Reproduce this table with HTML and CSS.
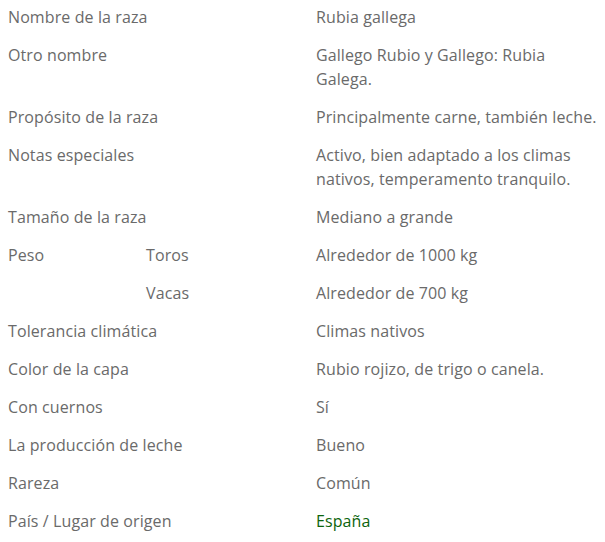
FILE: index.html
```html
<!DOCTYPE html>
<html lang="es">
<head>
<meta charset="utf-8">
<link rel="stylesheet" href="styles.css">
</head>
<body>
<div class="specs">
  <div class="label wide">Nombre de la raza</div><div class="value">Rubia gallega</div>
  <div class="label wide">Otro nombre</div><div class="value">Gallego Rubio y Gallego: Rubia Galega.</div>
  <div class="label wide">Propósito de la raza</div><div class="value">Principalmente carne, también leche.</div>
  <div class="label wide">Notas especiales</div><div class="value">Activo, bien adaptado a los climas nativos, temperamento tranquilo.</div>
  <div class="label wide">Tamaño de la raza</div><div class="value">Mediano a grande</div>
  <div class="label">Peso</div><div class="label">Toros</div><div class="value">Alrededor de 1000 kg</div>
  <div class="label"></div><div class="label">Vacas</div><div class="value">Alrededor de 700 kg</div>
  <div class="label wide">Tolerancia climática</div><div class="value">Climas nativos</div>
  <div class="label wide">Color de la capa</div><div class="value">Rubio rojizo, de trigo o canela.</div>
  <div class="label wide">Con cuernos</div><div class="value">Sí</div>
  <div class="label wide">La producción de leche</div><div class="value">Bueno</div>
  <div class="label wide">Rareza</div><div class="value">Común</div>
  <div class="label wide">País / Lugar de origen</div><div class="value"><a class="link" href="#">España</a></div>
</div>
</body>
</html>
```
FILE: styles.css
```css
html, body {
  margin: 0;
  padding: 0;
  background: #ffffff;
}
body {
  font-family: "Open Sans", "Noto Sans", sans-serif;
  font-size: 16px;
  line-height: 24px;
  color: #6a6a6a;
  letter-spacing: 0.1px;
}
.specs {
  display: grid;
  grid-template-columns: 138px 170px 1fr;
  padding: 5px 0 0 8px;
}
.label, .value {
  padding-bottom: 14px;
}
.wide {
  grid-column: span 2;
}
.link {
  color: #0c640c;
  text-decoration: none;
}
```
